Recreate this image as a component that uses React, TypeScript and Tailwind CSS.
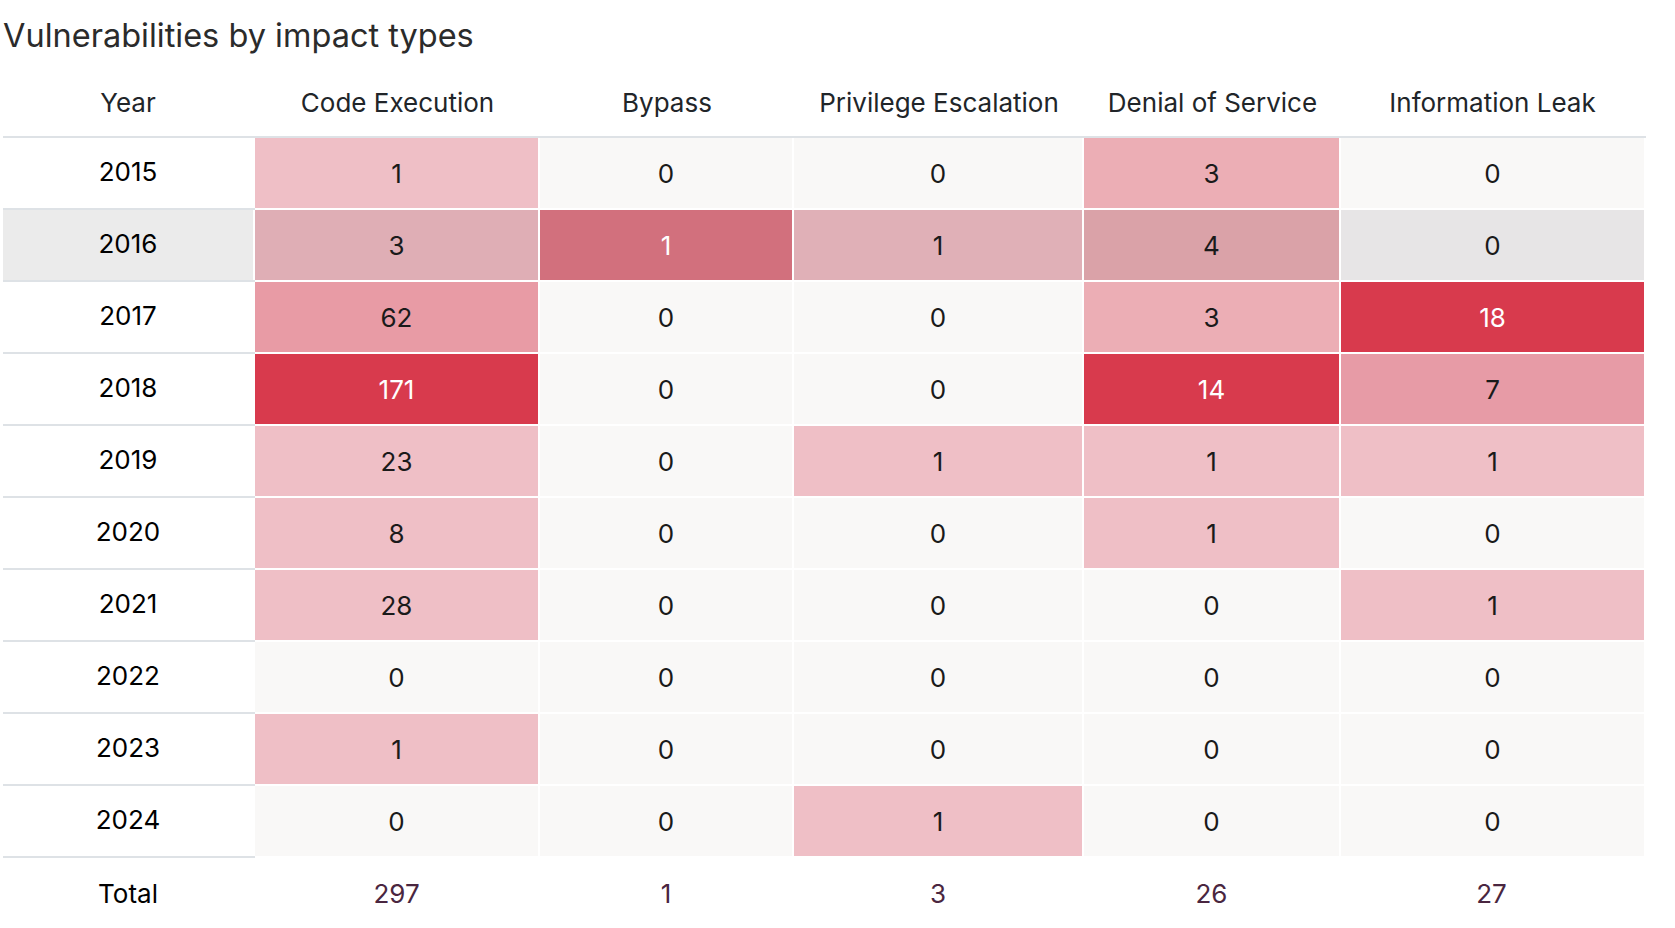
import React from "react";

type Cell = { v: string; bg: string; light?: boolean };

const Z = "bg-[#f9f8f7]";
const P = "bg-[#efbfc6]";

const rows: { year: string; hover?: boolean; cells: Cell[] }[] = [
  { year: "2015", cells: [{ v: "1", bg: P }, { v: "0", bg: Z }, { v: "0", bg: Z }, { v: "3", bg: "bg-[#ecaeb5]" }, { v: "0", bg: Z }] },
  {
    year: "2016",
    hover: true,
    cells: [
      { v: "3", bg: "bg-[#dfaeb5]" },
      { v: "1", bg: "bg-[#d2707d]", light: true },
      { v: "1", bg: "bg-[#e0b0b7]" },
      { v: "4", bg: "bg-[#daa2a8]" },
      { v: "0", bg: "bg-[#e7e5e6]" },
    ],
  },
  { year: "2017", cells: [{ v: "62", bg: "bg-[#e89ba5]" }, { v: "0", bg: Z }, { v: "0", bg: Z }, { v: "3", bg: "bg-[#ecaeb5]" }, { v: "18", bg: "bg-[#d83a4d]", light: true }] },
  { year: "2018", cells: [{ v: "171", bg: "bg-[#d83a4d]", light: true }, { v: "0", bg: Z }, { v: "0", bg: Z }, { v: "14", bg: "bg-[#d83a4d]", light: true }, { v: "7", bg: "bg-[#e79ba6]" }] },
  { year: "2019", cells: [{ v: "23", bg: P }, { v: "0", bg: Z }, { v: "1", bg: P }, { v: "1", bg: P }, { v: "1", bg: P }] },
  { year: "2020", cells: [{ v: "8", bg: P }, { v: "0", bg: Z }, { v: "0", bg: Z }, { v: "1", bg: P }, { v: "0", bg: Z }] },
  { year: "2021", cells: [{ v: "28", bg: P }, { v: "0", bg: Z }, { v: "0", bg: Z }, { v: "0", bg: Z }, { v: "1", bg: P }] },
  { year: "2022", cells: [{ v: "0", bg: Z }, { v: "0", bg: Z }, { v: "0", bg: Z }, { v: "0", bg: Z }, { v: "0", bg: Z }] },
  { year: "2023", cells: [{ v: "1", bg: P }, { v: "0", bg: Z }, { v: "0", bg: Z }, { v: "0", bg: Z }, { v: "0", bg: Z }] },
  { year: "2024", cells: [{ v: "0", bg: Z }, { v: "0", bg: Z }, { v: "1", bg: P }, { v: "0", bg: Z }, { v: "0", bg: Z }] },
];

const headers = ["Code Execution", "Bypass", "Privilege Escalation", "Denial of Service", "Information Leak"];
const totals = ["297", "1", "3", "26", "27"];

const cols = "grid grid-cols-[252px_285px_254px_290px_257px_303px]";

export default function App() {
  return (
    <div className="w-[1675px] h-[928px] bg-white overflow-hidden pl-[3px] text-[#212529]" style={{ fontFamily: "Inter, 'Noto Sans', sans-serif" }}>
      <h1 className="text-[32.5px] leading-[38px] pt-[17px] font-normal text-[#2b2b2b]">Vulnerabilities by impact types</h1>
      <div className="w-[1643px]">
        <div className={`${cols} h-[83px] border-b-2 border-[#dee2e6] items-center pt-[14px]`}>
          <div className="text-center text-[26px] pr-[2px]">Year</div>
          {headers.map((h) => (
            <div key={h} className="text-center text-[26px]">
              {h}
            </div>
          ))}
        </div>
        {rows.map((r) => (
          <div key={r.year} className={`${cols} h-[72px] w-[1641px]`}>
            <div className="h-[72px] border-b-2 border-[#dee2e6]">
              <div className={`h-[70px] w-[250px] flex items-center justify-center pb-[4px] text-[26px] text-black ${r.hover ? "bg-[#ebebeb]" : "bg-white"}`}>
                {r.year}
              </div>
            </div>
            {r.cells.map((c, i) => (
              <div key={i} className="h-[72px] pb-[2px] pr-[2px] last:pr-0">
                <div className={`h-[70px] flex items-center justify-center text-[26px] ${c.bg} ${c.light ? "text-white" : "text-[#1a1a1a]"}`}>
                  {c.v}
                </div>
              </div>
            ))}
          </div>
        ))}
        <div className={`${cols} h-[70px] w-[1641px] items-center`}>
          <div className="text-center text-[26px] text-black pr-[2px]">Total</div>
          {totals.map((t, i) => (
            <div key={i} className="text-center text-[26px] text-[#4a2640] pr-[2px]">
              {t}
            </div>
          ))}
        </div>
      </div>
    </div>
  );
}
